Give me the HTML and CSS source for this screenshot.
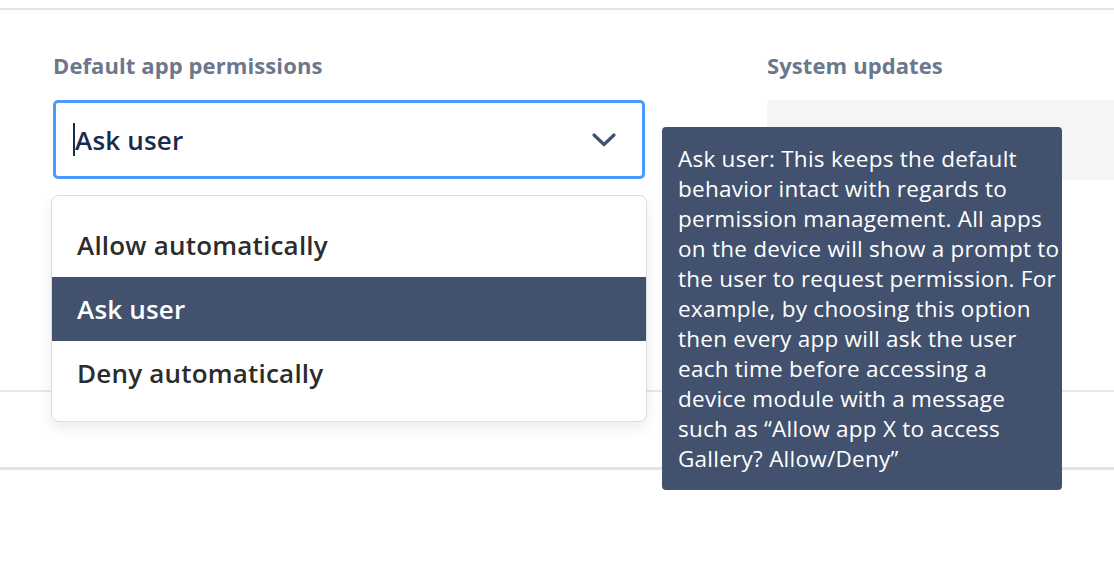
FILE: index.html
```html
<!DOCTYPE html>
<html>
<head>
<meta charset="utf-8">
<link rel="stylesheet" href="styles.css">
</head>
<body>
<div class="topbar"></div>
<section class="row first">
  <div class="col col-left">
    <div class="label">Default app permissions</div>
    <div class="select-wrap">
      <div class="select">
        <span class="caret"></span><span class="value">Ask user</span>
        <svg class="chevron" width="24" height="14" viewBox="0 0 24 14"><path d="M2 2 L12 11.5 L22 2" fill="none" stroke="#42526e" stroke-width="3.2" stroke-linecap="round" stroke-linejoin="round"/></svg>
      </div>
      <ul class="menu">
        <li class="item">Allow automatically</li>
        <li class="item active">Ask user</li>
        <li class="item">Deny automatically</li>
      </ul>
      <div class="tooltip">Ask user: This keeps the default<br>behavior intact with regards to<br>permission management. All apps<br>on the device will show a prompt to<br>the user to request permission. For<br>example, by choosing this option<br>then every app will ask the user<br>each time before accessing a<br>device module with a message<br>such as “Allow app X to access<br>Gallery? Allow/Deny”</div>
    </div>
  </div>
  <div class="col col-right">
    <div class="label">System updates</div>
    <div class="graybox"></div>
  </div>
</section>
<section class="row second"></section>
</body>
</html>
```

FILE: styles.css
```css
html {
  height: 100%;
  overflow: hidden;
}

body {
  margin: 0;
  padding: 0;
  min-height: 100%;
  background: #ffffff;
  font-family: "Open Sans", "Noto Sans", sans-serif;
}

.topbar {
  height: 8px;
  border-bottom: 2px solid #e4e5e9;
}

.row {
  display: flex;
  box-sizing: border-box;
}

.row.first {
  height: 382px;
  padding: 40px 0 0 53px;
  gap: 121px;
  border-bottom: 2px solid #e6e7eb;
}

.row.second {
  height: 78px;
  border-bottom: 3px solid #e3e4e8;
}

.col-left {
  width: 592px;
  flex: none;
}

.col-right {
  flex: 1;
  padding-left: 1px;
}

.label {
  font-size: 22px;
  font-weight: 700;
  color: #6b778c;
  line-height: 30px;
  height: 30px;
  margin-bottom: 20px;
  letter-spacing: 0.1px;
}

.select-wrap {
  position: relative;
}

.select {
  box-sizing: border-box;
  height: 79px;
  border: 3px solid #4c9aff;
  border-radius: 5px;
  display: flex;
  align-items: center;
  padding: 0 26px 0 17px;
}

.caret {
  width: 2px;
  height: 33px;
  background: #172b4d;
}

.value {
  flex: 1;
  font-size: 26px;
  font-weight: 600;
  color: #172b4d;
  margin-top: 1px;
  letter-spacing: 0.2px;
}

.chevron {
  display: block;
  margin-top: 1px;
}

.menu {
  position: absolute;
  top: 95px;
  left: -2px;
  width: 596px;
  box-sizing: border-box;
  margin: 0;
  padding: 17px 0 16px;
  list-style: none;
  background: #fff;
  border: 1px solid #dcdde0;
  border-radius: 8px;
  box-shadow: 0 6px 14px rgba(0, 0, 0, 0.08);
}

.item {
  height: 64px;
  line-height: 64px;
  padding-left: 25px;
  font-size: 26px;
  font-weight: 600;
  color: #2c2c2c;
  letter-spacing: 0.2px;
}

.item.active {
  background: #42526e;
  color: #ffffff;
}

.tooltip {
  position: absolute;
  top: 27px;
  left: 609px;
  width: 400px;
  height: 363px;
  box-sizing: border-box;
  padding: 17px 0 0 16px;
  background: #42526e;
  border-radius: 4px;
  color: #ffffff;
  font-size: 22.5px;
  line-height: 30px;
  white-space: nowrap;
  letter-spacing: 0.25px;
  z-index: 2;
}

.graybox {
  height: 80px;
  background: #f4f5f7;
  border-radius: 4px 0 0 4px;
}
```
